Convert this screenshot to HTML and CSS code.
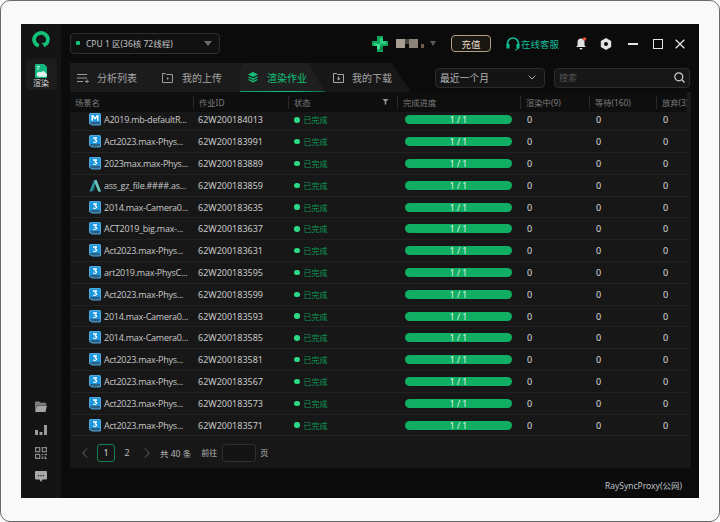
FILE: index.html
```html
<!DOCTYPE html>
<html lang="zh">
<head>
<meta charset="utf-8">
<title>渲染作业</title>
<link rel="stylesheet" href="styles.css">
</head>
<body>
<svg class="defs" width="0" height="0" aria-hidden="true">
  <symbol id="i-max" viewBox="0 0 12 13">
    <path d="M1.500 0h9A1.500 1.500 0 0 1 12 1.500V11a1.500 1.500 0 0 1-1.500 1.500H3L0 10.500v-9A1.500 1.500 0 0 1 1.500 0z" fill="#4fa9de"/>
    <path d="M1.800 1h8.400a.8.8 0 0 1 .8.800V9H1V1.800a.8.8 0 0 1 .8-.8z" fill="#1f97dc"/>
    <path d="M1 9h10v1.500a1 1 0 0 1-1 1H3.300L1 10z" fill="#2f5f80"/>
    <path d="M4 2.300h4v1.100L6.700 4.500C7.600 4.700 8.200 5.200 8.200 6.100 8.200 7.200 7.200 7.900 6 7.900c-.8 0-1.500-.2-2.100-.6l.4-.9c.5.3 1 .5 1.600.5.600 0 1-.3 1-.7 0-.5-.5-.7-1.500-.7v-.8l1.200-1H4z" fill="#fff"/>
  </symbol>
  <symbol id="i-maya" viewBox="0 0 12 13">
    <path d="M1.500 0h9A1.500 1.500 0 0 1 12 1.500V11a1.500 1.500 0 0 1-1.500 1.500H3L0 10.500v-9A1.500 1.500 0 0 1 1.500 0z" fill="#4fa9de"/>
    <path d="M1.800 1h8.400a.8.8 0 0 1 .8.800V9H1V1.800a.8.8 0 0 1 .8-.8z" fill="#1f97dc"/>
    <path d="M1 9h10v1.500a1 1 0 0 1-1 1H3.300L1 10z" fill="#2f5f80"/>
    <path d="M2.500 7.800V2h1.600L6 4.500 7.900 2h1.600v5.800H8V4.300L6 6.700 4 4.300v3.500z" fill="#fff"/>
  </symbol>
  <symbol id="i-ass" viewBox="0 0 12 13">
    <path d="M5 1h2.500L12 12.500H9.300L6.200 5 3.300 12.500H.4z" fill="#2f8f9d"/>
    <path d="M6 1h1.500L12 12.500H9.300L6 4z" fill="#6cc4ba"/>
    <path d="M4 9.500l2.200-2.600L5 12.500z" fill="#1d6f80"/>
  </symbol>
</svg>

<div class="frame">
  <div class="app">
    <aside class="sidebar">
      <svg class="logo" viewBox="0 0 18 17" width="18" height="17" aria-hidden="true">
        <path d="M6.800 14.800A6.900 6.600 0 1 1 13.600 13.500" fill="none" stroke="#11c278" stroke-width="3.800"/>
        <path d="M9.500 11.500l5.500 1-2 4z" fill="#11c278"/>
      </svg>
      <div class="nav-item">
        <svg viewBox="0 0 12 14" width="12" height="14" aria-hidden="true">
          <path d="M1 0h8l3 3v10a1 1 0 0 1-1 1H1a1 1 0 0 1-1-1V1a1 1 0 0 1 1-1z" fill="#13b87e"/>
          <path d="M3 12.800h7.500a1.600 1.600 0 0 0 .2-3.200A2.600 2.600 0 0 0 6 8.300a2.300 2.300 0 0 0-3 4.500z" fill="#e4f3ee"/>
          <path d="M2 2h3v1.200H2zM2 4.200h2v1.200H2z" fill="#bff0dc"/>
        </svg>
        <span>渲染</span>
      </div>
      <div class="side-tools">
        <svg viewBox="0 0 12 11" width="12" height="11" aria-hidden="true"><path d="M0 1.500A1 1 0 0 1 1 .5h3.500l1 1.200H11V4H2L0 10z" fill="#7f7f7f"/><path d="M2 4.500h10L10.500 11H0z" fill="#a4a4a4"/></svg>
        <svg viewBox="0 0 12 11" width="12" height="11" aria-hidden="true"><path d="M0 6h3v5H0zM4.500 8h3v3h-3zM9 1h3v10H9z" fill="#9a9a9a"/></svg>
        <svg viewBox="0 0 12 12" width="12" height="12" aria-hidden="true"><path d="M0 0h5.300v5.300H0zM1.200 1.200v2.900h2.900V1.200zM6.700 0H12v5.300H6.700zM7.900 1.200v2.900h2.900V1.200zM0 6.700h5.300V12H0zM1.200 7.900v2.900h2.900V7.900zM6.700 6.700h1.500v1.500H6.700zM9.500 6.700H12v1.500H9.500zM6.700 9.500h1.500V12H6.700zM9.500 9.500H11v1.500h1V12H9.500z" fill="#8a8a8a" fill-rule="evenodd"/></svg>
        <svg viewBox="0 0 12 11" width="12" height="11" aria-hidden="true"><path d="M1 0h10a1 1 0 0 1 1 1v6.500a1 1 0 0 1-1 1H7.500L6 11 4.500 8.500H1a1 1 0 0 1-1-1V1a1 1 0 0 1 1-1z" fill="#a8a8a8"/><path d="M3 4h1.200v1.200H3zM5.400 4h1.200v1.200H5.400zM7.800 4H9v1.200H7.800z" fill="#222"/></svg>
      </div>
    </aside>

    <main class="main">
      <header class="topbar">
        <div class="zone">
          <i class="zone-dot"></i>
          <span class="zone-text">CPU 1 区(36核 72线程)</span>
          <i class="caret zone-caret"></i>
        </div>
        <div class="top-right">
          <svg class="avatar" viewBox="0 0 16 16" width="16" height="16" aria-hidden="true"><path d="M5 0h6v5h5v5h-5v6H5v-6H0V5h5z" fill="#0fa45e"/><path d="M8 2h3v3h3v3H8zM2 7h3v3H2z" fill="#27cf80"/><path d="M5 8h3v5H5z" fill="#45e09a"/><path d="M8 11h3v3H8z" fill="#0a7f49"/></svg>
          <div class="mosaic"><i></i><i></i><i></i><i></i></div>
          <i class="caret user-caret"></i>
          <button class="recharge" type="button">充值</button>
          <div class="service">
            <svg viewBox="0 0 14 14" width="14" height="14" aria-hidden="true"><path d="M1.500 8V6.500a5.500 5.500 0 0 1 11 0V8" fill="none" stroke="#12c29a" stroke-width="1.600"/><path d="M.5 7h3v4.500h-3zM10.500 7h3v4.500h-3z" fill="#12c29a"/><path d="M12 11c0 1.500-1.500 2-3 2" fill="none" stroke="#12c29a"/></svg>
            <span>在线客服</span>
          </div>
          <svg class="bell" viewBox="0 0 11 13" width="11" height="13" aria-hidden="true"><path d="M5 1.500a3.500 3.500 0 0 1 3.500 3.500v3.500l1.500 1.500H0l1.500-1.500V5A3.500 3.500 0 0 1 5 1.500z" fill="#e0e0e0"/><path d="M3.500 11h3a1.500 1.500 0 0 1-3 0z" fill="#e0e0e0"/><circle cx="8.500" cy="2" r="1.800" fill="#e8503a"/></svg>
          <svg class="gear" viewBox="0 0 12 12" width="12" height="12" aria-hidden="true"><path fill-rule="evenodd" d="M6 0l5.200 3v6L6 12 .8 9V3zM6 4a2 2 0 1 0 0 4 2 2 0 0 0 0-4z" fill="#e4e4e4"/></svg>
          <i class="win-min"></i>
          <i class="win-max"></i>
          <svg class="win-close" viewBox="0 0 10 10" width="10" height="10" aria-hidden="true"><path d="M.7.700l8.600 8.600M9.300.700L.7 9.300" stroke="#e4e4e4" stroke-width="1.300"/></svg>
        </div>
      </header>

      <div class="toolbar">
        <nav class="tabs">
          <div class="tab t1">
            <svg viewBox="0 0 12 10" width="12" height="10" aria-hidden="true"><path d="M0 1h10v1H0zM0 4.500h10v1H0zM0 8h6v1H0zM8 8h4v1H8zM9.500 6.500h1v4h-1z" fill="#9a9a9a"/></svg>
            <span>分析列表</span>
          </div>
          <div class="tab t2">
            <svg viewBox="0 0 11 10" width="11" height="10" aria-hidden="true"><path d="M.5.500h3l1 1h6v8H.5z" fill="none" stroke="#9a9a9a"/><path d="M5 4l2 1.500L5 7z" fill="#9a9a9a"/></svg>
            <span>我的上传</span>
          </div>
          <div class="tab active">
            <svg viewBox="0 0 10 11" width="10" height="11" aria-hidden="true"><path d="M5 0l5 2.500L5 5 0 2.500z" fill="#12c178"/><path d="M.5 5L5 7.200 9.500 5M.5 7.500L5 9.700l4.500-2.200" fill="none" stroke="#12c178" stroke-width="1.300"/></svg>
            <span>渲染作业</span>
          </div>
          <div class="tab t4">
            <svg viewBox="0 0 11 10" width="11" height="10" aria-hidden="true"><path d="M.5.500h3l1 1h6v8H.5z" fill="none" stroke="#a8a8a8"/><path d="M5 3.500h1.200V5.500h1.300L5.600 7.500 3.700 5.500H5z" fill="#a8a8a8"/></svg>
            <span>我的下载</span>
          </div>
        </nav>
        <div class="range">
          <span>最近一个月</span>
          <svg viewBox="0 0 8 5" width="8" height="5" aria-hidden="true"><path d="M.7.700L4 4 7.300.7" fill="none" stroke="#aaa"/></svg>
        </div>
        <div class="search">
          <span>搜索</span>
          <svg viewBox="0 0 11 11" width="11" height="11" aria-hidden="true"><circle cx="4.800" cy="4.800" r="4" fill="none" stroke="#ccc" stroke-width="1.200"/><path d="M7.800 7.800L10.500 10.500" stroke="#ccc" stroke-width="1.300"/></svg>
        </div>
      </div>

      <section class="panel">
        <div class="thead">
          <div class="th">场景名</div>
          <div class="th sep">作业ID</div>
          <div class="th sep status-head">状态<i class="filter"></i></div>
          <div class="th sep">完成进度</div>
          <div class="th sep">渲染中(9)</div>
          <div class="th sep">等待(160)</div>
          <div class="th sep">放弃(3)</div>
        </div>
        <div class="tbody">
          <div class="rows">
            <div class="row"><div class="name"><svg><use href="#i-maya"/></svg><span>A2019.mb-defaultR...</span></div><div class="id">62W200184013</div><div class="st"><i></i>已完成</div><div class="prog"><div class="bar">1 / 1</div></div><div class="n">0</div><div class="n">0</div><div class="n">0</div></div>
            <div class="row"><div class="name"><svg><use href="#i-max"/></svg><span>Act2023.max-Phys...</span></div><div class="id">62W200183991</div><div class="st"><i></i>已完成</div><div class="prog"><div class="bar">1 / 1</div></div><div class="n">0</div><div class="n">0</div><div class="n">0</div></div>
            <div class="row"><div class="name"><svg><use href="#i-max"/></svg><span>2023max.max-Phys...</span></div><div class="id">62W200183889</div><div class="st"><i></i>已完成</div><div class="prog"><div class="bar">1 / 1</div></div><div class="n">0</div><div class="n">0</div><div class="n">0</div></div>
            <div class="row"><div class="name"><svg><use href="#i-ass"/></svg><span>ass_gz_file.####.as...</span></div><div class="id">62W200183859</div><div class="st"><i></i>已完成</div><div class="prog"><div class="bar">1 / 1</div></div><div class="n">0</div><div class="n">0</div><div class="n">0</div></div>
            <div class="row"><div class="name"><svg><use href="#i-max"/></svg><span>2014.max-Camera0...</span></div><div class="id">62W200183635</div><div class="st"><i></i>已完成</div><div class="prog"><div class="bar">1 / 1</div></div><div class="n">0</div><div class="n">0</div><div class="n">0</div></div>
            <div class="row"><div class="name"><svg><use href="#i-max"/></svg><span>ACT2019_big.max-...</span></div><div class="id">62W200183637</div><div class="st"><i></i>已完成</div><div class="prog"><div class="bar">1 / 1</div></div><div class="n">0</div><div class="n">0</div><div class="n">0</div></div>
            <div class="row"><div class="name"><svg><use href="#i-max"/></svg><span>Act2023.max-Phys...</span></div><div class="id">62W200183631</div><div class="st"><i></i>已完成</div><div class="prog"><div class="bar">1 / 1</div></div><div class="n">0</div><div class="n">0</div><div class="n">0</div></div>
            <div class="row"><div class="name"><svg><use href="#i-max"/></svg><span>art2019.max-PhysC...</span></div><div class="id">62W200183595</div><div class="st"><i></i>已完成</div><div class="prog"><div class="bar">1 / 1</div></div><div class="n">0</div><div class="n">0</div><div class="n">0</div></div>
            <div class="row"><div class="name"><svg><use href="#i-max"/></svg><span>Act2023.max-Phys...</span></div><div class="id">62W200183599</div><div class="st"><i></i>已完成</div><div class="prog"><div class="bar">1 / 1</div></div><div class="n">0</div><div class="n">0</div><div class="n">0</div></div>
            <div class="row"><div class="name"><svg><use href="#i-max"/></svg><span>2014.max-Camera0...</span></div><div class="id">62W200183593</div><div class="st"><i></i>已完成</div><div class="prog"><div class="bar">1 / 1</div></div><div class="n">0</div><div class="n">0</div><div class="n">0</div></div>
            <div class="row"><div class="name"><svg><use href="#i-max"/></svg><span>2014.max-Camera0...</span></div><div class="id">62W200183585</div><div class="st"><i></i>已完成</div><div class="prog"><div class="bar">1 / 1</div></div><div class="n">0</div><div class="n">0</div><div class="n">0</div></div>
            <div class="row"><div class="name"><svg><use href="#i-max"/></svg><span>Act2023.max-Phys...</span></div><div class="id">62W200183581</div><div class="st"><i></i>已完成</div><div class="prog"><div class="bar">1 / 1</div></div><div class="n">0</div><div class="n">0</div><div class="n">0</div></div>
            <div class="row"><div class="name"><svg><use href="#i-max"/></svg><span>Act2023.max-Phys...</span></div><div class="id">62W200183567</div><div class="st"><i></i>已完成</div><div class="prog"><div class="bar">1 / 1</div></div><div class="n">0</div><div class="n">0</div><div class="n">0</div></div>
            <div class="row"><div class="name"><svg><use href="#i-max"/></svg><span>Act2023.max-Phys...</span></div><div class="id">62W200183573</div><div class="st"><i></i>已完成</div><div class="prog"><div class="bar">1 / 1</div></div><div class="n">0</div><div class="n">0</div><div class="n">0</div></div>
            <div class="row"><div class="name"><svg><use href="#i-max"/></svg><span>Act2023.max-Phys...</span></div><div class="id">62W200183571</div><div class="st"><i></i>已完成</div><div class="prog"><div class="bar">1 / 1</div></div><div class="n">0</div><div class="n">0</div><div class="n">0</div></div>
          </div>
        </div>
        <div class="pager">
          <svg class="chev" viewBox="0 0 6 10" width="6" height="10" aria-hidden="true"><path d="M5 .5L.8 5 5 9.500" fill="none" stroke="#666"/></svg>
          <span class="page on">1</span>
          <span class="page">2</span>
          <svg class="chev next" viewBox="0 0 6 10" width="6" height="10" aria-hidden="true"><path d="M1 .5L5.200 5 1 9.500" fill="none" stroke="#666"/></svg>
          <span class="total">共 40 条</span>
          <span class="goto">前往</span>
          <span class="jump"></span>
          <span class="unit">页</span>
        </div>
      </section>

      <footer class="foot">RaySyncProxy(公网)</footer>
    </main>
  </div>
</div>
</body>
</html>
```

FILE: styles.css
```css
* { box-sizing: border-box; }
html, body { margin: 0; padding: 0; }
body {
  width: 720px;
  height: 522px;
  overflow: hidden;
  background: #fafafa;
  font-family: "Noto Sans", "Noto Sans CJK SC", sans-serif;
  font-size: 9px;
  color: #c8c8c8;
}
.defs { position: absolute; }
i { display: block; font-style: normal; }

.frame {
  width: 720px;
  height: 522px;
  padding: 23px 20px 23px 20px;
  border: 1px solid #6a6a6a;
  border-radius: 10px;
  background: #fafafa;
}
.app { display: flex; width: 678px; height: 474px; background: #0b0b0b; }

/* sidebar */
.sidebar {
  width: 40px;
  flex: none;
  display: flex;
  flex-direction: column;
  align-items: center;
  background: #141414;
  padding-top: 7px;
}
.logo { display: block; }
.nav-item {
  width: 31px;
  height: 31px;
  margin-top: 11px;
  border-radius: 4px;
  background: #1c1c1c;
  display: flex;
  flex-direction: column;
  align-items: center;
  padding-top: 5px;
  color: #d8d8d8;
  font-size: 8px;
  line-height: 10px;
}
.side-tools {
  margin-top: auto;
  padding-bottom: 16px;
  display: flex;
  flex-direction: column;
  align-items: center;
  gap: 12px;
}
.side-tools svg { display: block; }

/* main */
.main { flex: 1; min-width: 0; display: flex; flex-direction: column; }
.topbar {
  height: 39px;
  flex: none;
  display: flex;
  align-items: center;
  padding: 0 14px 0 9px;
}
.zone {
  width: 150px;
  height: 21px;
  margin-top: -1px;
  display: flex;
  align-items: center;
  border: 1px solid #2f2f2f;
  border-radius: 4px;
  background: #111;
  padding: 0 4px 0 5px;
  color: #c4c4c4;
  font-size: 8.500px;
}
.zone-dot { width: 4px; height: 4px; background: #13c07a; border-radius: 1px; }
.zone-text { margin-left: 6px; }
.caret { width: 0; height: 0; border-style: solid; border-color: #6c6c6c transparent transparent; }
.zone-caret { margin-left: auto; margin-right: 3px; border-width: 5px 4.500px 0; }
.top-right { margin-left: auto; display: flex; align-items: center; }
.avatar { display: block; }
.mosaic { display: flex; margin-left: 8px; width: 29px; height: 9px; }
.mosaic i { height: 9px; }
.mosaic i:nth-child(1) { width: 9px; background: #a79d90; }
.mosaic i:nth-child(2) { width: 4px; height: 5px; background: #4d4640; }
.mosaic i:nth-child(3) { width: 9px; background: #8b8378; }
.mosaic i:nth-child(4) { width: 3px; height: 4px; margin: 5px 0 0 3px; background: #6f5c48; }
.user-caret { margin-left: 5px; border-width: 5px 3.500px 0; border-top-color: #5a5a5a; }
.recharge {
  width: 40px;
  height: 17px;
  margin-left: 15px;
  padding: 0;
  border: 1px solid #b09f82;
  border-radius: 4px;
  background: #1a1712;
  color: #e6dcc6;
  font: 9.500px "Noto Sans CJK SC", sans-serif;
}
.service { display: flex; align-items: center; margin-left: 15px; color: #12bd9a; font-size: 9.500px; }
.service span { margin-left: 1px; }
.bell { margin-left: 17px; display: block; }
.gear { margin-left: 13px; display: block; }
.win-min { width: 10px; height: 2px; margin-left: 16px; background: #e4e4e4; }
.win-max { width: 10px; height: 10px; margin-left: 15px; border: 1.500px solid #e4e4e4; }
.win-close { margin-left: 12px; display: block; }

/* toolbar */
.toolbar {
  height: 29px;
  flex: none;
  margin: 0 8px 0 9px;
  display: flex;
  align-items: center;
}
.tabs {
  width: 341px;
  height: 29px;
  display: flex;
  background: #171717;
  border-radius: 4px 4px 0 0;
  clip-path: polygon(0 0, 322px 0, 341px 100%, 0 100%);
  font-size: 10px;
  color: #a6a6a6;
}
.tab { display: flex; align-items: center; height: 29px; flex: none; }
.tab span { margin-left: 9px; }
.t1 { width: 85px; padding-left: 7px; background: #1b1b1b; }
.t1 span { margin-left: 8px; }
.t2 { width: 85px; padding-left: 7px; background: #1b1b1b; }
.t4 { width: 71px; padding-left: 8px; }
.t4 span { margin-left: 8px; }
.active {
  width: 85px;
  padding-left: 8px;
  color: #12c178;
  background: #1f1f1f linear-gradient(90deg, #0c9a5c, #14c47a 60%, #0a6a42) no-repeat 0 100% / 100% 1px;
  border-radius: 6px 0 0 0;
  clip-path: polygon(0 0, 68px 0, 85px 100%, 0 100%);
}
.range {
  width: 110px;
  height: 20px;
  margin-left: 24px;
  display: flex;
  align-items: center;
  justify-content: space-between;
  padding: 0 8px 0 4px;
  border: 1px solid #2c2c2c;
  border-radius: 4px;
  background: #141414;
  color: #b8b8b8;
  font-size: 9.800px;
}
.search {
  width: 136px;
  height: 20px;
  margin-left: 9px;
  display: flex;
  align-items: center;
  justify-content: space-between;
  padding: 0 4px;
  border: 1px solid #2c2c2c;
  border-radius: 4px;
  background: #171717;
  color: #555;
}

/* table */
.panel {
  margin: 0 8px 0 9px;
  width: 621px;
  height: 376px;
  flex: none;
  background: #171717;
  display: flex;
  flex-direction: column;
}
.thead, .row {
  display: grid;
  grid-template-columns: 123px 95px 109px 123px 69px 67px 31px;
  width: 617px;
}
.thead {
  height: 20px;
  flex: none;
  background: #0e0e0e;
  color: #7c7c7c;
  align-items: center;
  box-shadow: 4px 0 0 #1a1a1a;
  font-size: 8.300px;
}
.th { position: relative; padding-left: 5px; white-space: nowrap; overflow: hidden; height: 13px; line-height: 13px; }
.sep { border-left: 1px solid #2a2a2a; }
.status-head { display: flex; justify-content: space-between; padding-right: 8px; }
.filter {
  width: 7px; height: 6px; margin-top: 3px;
  background: #9a9a9a;
  clip-path: polygon(0 0, 100% 0, 60% 50%, 60% 100%, 40% 100%, 40% 50%);
}
.tbody { height: 325px; flex: none; overflow: hidden; position: relative; }
.rows { margin-top: -2.500px; }
.row {
  height: 21.800px;
  align-items: center;
  border-bottom: 1px solid #222;
  color: #c8c8c8;
}
.name { display: flex; align-items: center; padding-left: 19px; white-space: nowrap; overflow: hidden; }
.name svg { width: 12px; height: 13px; flex: none; }
.name span { margin-left: 3px; font-family: "Open Sans", "Noto Sans", sans-serif; letter-spacing: -0.25px; }
.id { padding-left: 5px; }
.st { display: flex; align-items: center; padding-left: 6px; color: #0f9b58; font-size: 8px; }
.st i { width: 5.500px; height: 5.500px; border-radius: 50%; background: #2ed884; margin-right: 4px; }
.prog { padding-left: 8px; }
.bar {
  width: 107px;
  height: 9px;
  border-radius: 5px;
  background: #0fae62;
  color: #e2f6ec;
  text-align: center;
  font-size: 8.500px;
  line-height: 9px;
}
.n { padding-left: 7px; color: #dcdcdc; }

/* pager */
.pager {
  height: 31px;
  flex: none;
  display: flex;
  align-items: center;
  padding-left: 12px;
  color: #b8b8b8;
}
.chev { display: block; }
.page { width: 18px; height: 18px; line-height: 16px; text-align: center; border: 1px solid transparent; margin-left: 3px; }
.on { border-color: #0f7f4d; border-radius: 3px; color: #d8d8d8; margin-left: 9px; }
.chev.next { margin-left: 8px; }
.total { margin-left: 10px; font-size: 8.500px; }
.goto { margin-left: 10px; font-size: 8px; }
.jump { width: 34px; height: 18px; margin-left: 5px; border: 1px solid #2e2e2e; border-radius: 3px; background: #141414; }
.unit { margin-left: 4px; font-size: 8px; }

.foot {
  flex: 1;
  display: flex;
  align-items: center;
  justify-content: flex-end;
  padding-right: 17px;
  padding-top: 4px;
  color: #bcc2c8;
  font-size: 8.500px;
}
```
